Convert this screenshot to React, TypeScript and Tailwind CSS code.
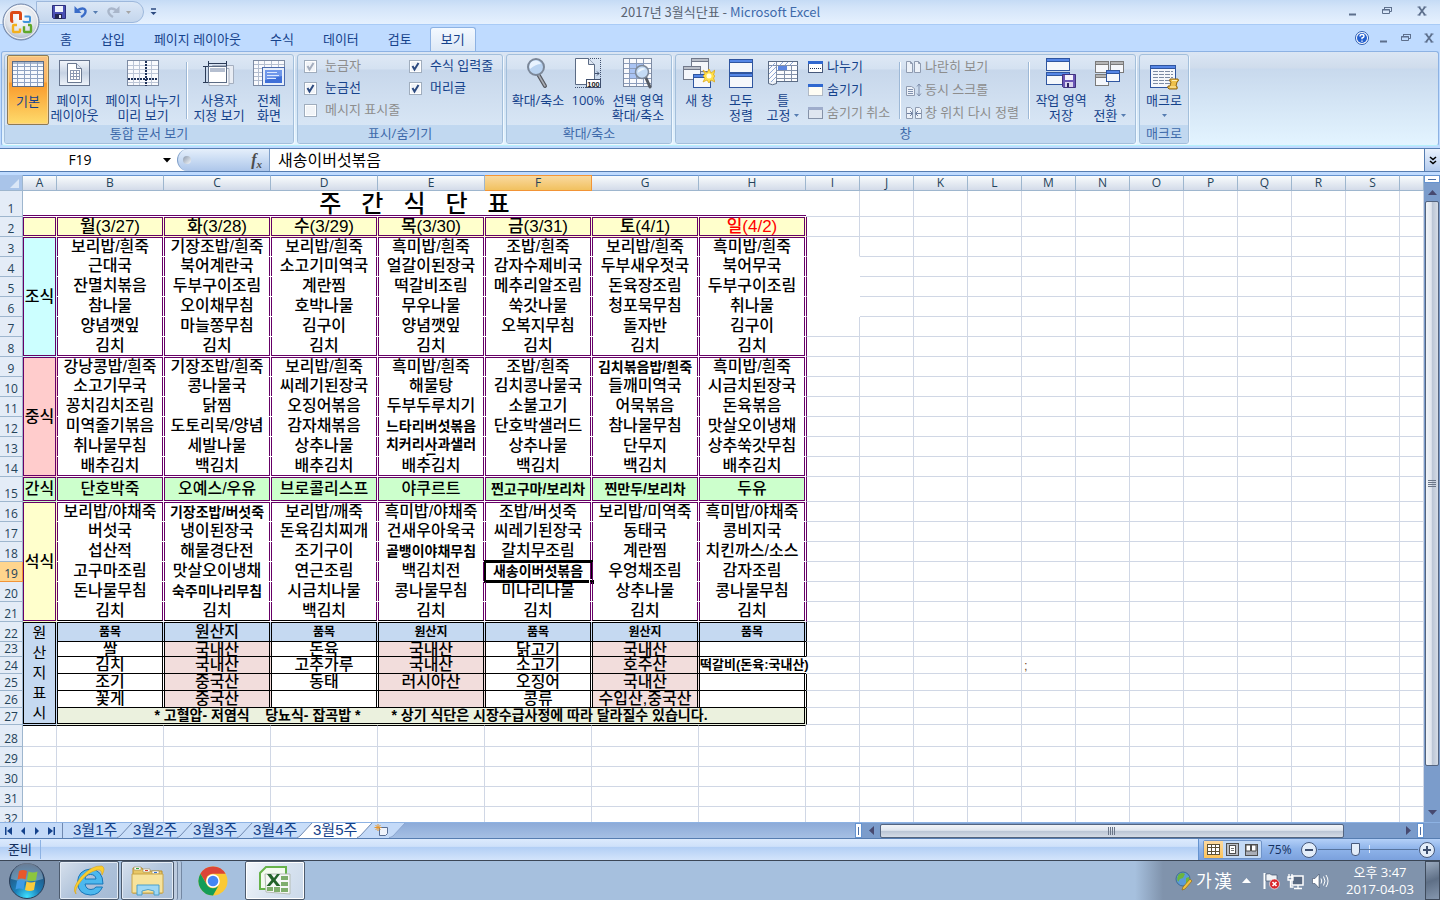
import React from 'react';

type IconProps = { className?: string };

/* ---------- ribbon icons ---------- */

const GridIcon = () => (
  <svg width="32" height="32" viewBox="0 0 32 32" shapeRendering="crispEdges">
    <rect x="0.5" y="2.5" width="31" height="25" fill="#f7f9fd" stroke="#5b6b84" />
    <path d="M1 3.500h30M1 4.500h30" stroke="#a9b8d0" />
    <path d="M1 7.500h30M1 11.500h30M1 15.500h30M1 19.500h30M1 23.500h30M5.500 3v24M12.500 3v24M18.500 3v24M25.500 3v24" stroke="#8fa2c2" />
  </svg>
);

const PageLayoutIcon = () => (
  <svg width="32" height="32" viewBox="0 0 32 32">
    <defs>
      <linearGradient id="pl" x1="0" y1="0" x2="0" y2="1">
        <stop offset="0" stopColor="#f4f7fc" />
        <stop offset=".5" stopColor="#c6d2e3" />
        <stop offset="1" stopColor="#eef3fa" />
      </linearGradient>
    </defs>
    <rect x="0.500" y="2.500" width="30" height="25" fill="url(#pl)" stroke="#67758e" />
    <path d="M8.500 5.500h9l5 5v14h-14z" fill="#fff" stroke="#6a7890" />
    <path d="M17.500 5.500v5h5" fill="#dfe6f1" stroke="#6a7890" />
    <path d="M11 12.500h10M11 15.500h10M11 18.500h10M11 21.500h10M11.500 12v10M14.500 12v10M17.500 12v10M20.500 12v10" stroke="#8b99b2" shapeRendering="crispEdges" />
  </svg>
);

const PageBreakIcon = () => (
  <svg width="32" height="32" viewBox="0 0 32 32" shapeRendering="crispEdges">
    <rect x="0.500" y="2.500" width="31" height="25" fill="#f9fafd" stroke="#7d8ba3" />
    <path d="M1 7.500h30M1 11.500h30M1 15.500h30M1 24.500h30M6.500 3v24M12.500 3v24M24.500 3v24" stroke="#bcc5d6" />
    <path d="M19 3v25M1 21h30" stroke="#1f3158" strokeWidth="2" strokeDasharray="2 1" />
  </svg>
);

const CustomViewIcon = () => (
  <svg width="32" height="32" viewBox="0 0 32 32">
    <path d="M9.500 7.500h21v18h-21z" fill="#e9edf4" stroke="#a5afbf" />
    <path d="M6 10.500h20v17H6z" fill="#f5f7fb" stroke="#a5afbf" />
    <rect x="5.500" y="8.500" width="18" height="16" fill="#fff" stroke="#5b6b84" />
    <rect x="7" y="10" width="15" height="4" fill="#b5bfd0" />
    <path d="M5 5.500h19M5.500 3v5M23.500 3v5M2.500 8v17M0 8.500h5M0 24.500h5" stroke="#2b3b57" shapeRendering="crispEdges" />
  </svg>
);

const FullScreenIcon = () => (
  <svg width="32" height="32" viewBox="0 0 32 32">
    <rect x="0.500" y="2.500" width="31" height="25" fill="#f9fafd" stroke="#7d8ba3" />
    <path d="M1 6.500h30M1 10.500h30M1 14.500h30M1 18.500h30M1 22.500h30M5.500 3v24M11.500 3v24M18.500 3v24M25.500 3v24" stroke="#b3bdcf" shapeRendering="crispEdges" />
    <rect x="9.500" y="9.500" width="22" height="18" fill="#e6eefb" stroke="#4c6cae" />
    <rect x="12" y="12" width="17" height="13" fill="#3f6fd8" />
    <path d="M12 12h17v6l-17 4z" fill="#6f97ea" />
    <path d="M14 14.500h10M14 17.500h12M14 20.500h9" stroke="#dce8ff" />
  </svg>
);

const MagnifierIcon = () => (
  <svg width="32" height="32" viewBox="0 0 32 32">
    <path d="M16 16l7 12" stroke="#55585f" strokeWidth="4" strokeLinecap="round" />
    <path d="M16 16l7 12" stroke="#a9adb5" strokeWidth="1.500" strokeLinecap="round" />
    <circle cx="14" cy="9" r="8" fill="#b9d3f1" stroke="#7b8798" strokeWidth="2" />
    <path d="M8 11a6 6 0 0 1 11-5q-5 0-11 5z" fill="#e8f3ff" />
  </svg>
);

const Page100Icon = () => (
  <svg width="32" height="32" viewBox="0 0 32 32">
    <path d="M18 0.500h10.500V30M3 29.500h12" fill="none" stroke="#3f4f6d" strokeDasharray="1 1" />
    <path d="M3.500 0.500h13l6 6v20h-19z" fill="#fff" stroke="#5b6b84" />
    <path d="M16.500 0.500v6h6" fill="#dde5f1" stroke="#5b6b84" />
    <path d="M23 15.500h4M25 13.500l2 2-2 2" fill="none" stroke="#3f4f6d" />
    <rect x="14.500" y="21.500" width="14" height="8" fill="#fff" stroke="#3f4f6d" />
    <text x="21.500" y="28.500" textAnchor="middle" fontSize="7.500" fontWeight="700" fontFamily="Liberation Sans, sans-serif" fill="#222">100</text>
  </svg>
);

const ZoomSelectionIcon = () => (
  <svg width="32" height="32" viewBox="0 0 32 32">
    <rect x="1.500" y="0.500" width="28" height="28" fill="#f9fafd" stroke="#7d8ba3" />
    <rect x="8" y="6" width="14" height="14" fill="#a9c3f3" />
    <path d="M2 5.500h27M2 10.500h27M2 15.500h27M2 20.500h27M2 25.500h27M7.500 1v27M14.500 1v27M21.500 1v27" stroke="#8b9cbb" shapeRendering="crispEdges" />
    <path d="M24 20l4 9" stroke="#555a63" strokeWidth="3" strokeLinecap="round" />
    <circle cx="20" cy="14" r="6.500" fill="#c4dbf5" stroke="#7b8798" strokeWidth="1.500" />
    <path d="M15.500 15a5 5 0 0 1 8-4q-4 1-8 4z" fill="#edf6ff" />
  </svg>
);

const Win = ({ x, y, w, h, c, s }: { x: number; y: number; w: number; h: number; c: string; s: string }) => (
  <g>
    <rect x={x + 0.5} y={y + 0.5} width={w} height={h} fill="#f5f7fb" stroke={s} />
    <rect x={x + 0.5} y={y + 0.5} width={w} height="3" fill={c} stroke={s} />
  </g>
);

const NewWindowIcon = () => (
  <svg width="32" height="32" viewBox="0 0 32 32">
    <Win x={8} y={0} w={17} h={13} c="#b9bec8" s="#70788a" />
    <Win x={0} y={8} w={17} h={13} c="#b9bec8" s="#70788a" />
    <Win x={10} y={16} w={17} h={13} c="#5586e6" s="#2f559f" />
    <path d="M20 12l4 3 2-4 2 4 4-3-1.500 5 1.500 1-1.500 2 1.500 4-4-2-2 3-2-3-4 2 2-4-2-2 2-2z" fill="#ffe14a" stroke="#e0a91a" strokeWidth=".8" />
    <circle cx="26" cy="18" r="2.500" fill="#fffce0" />
  </svg>
);

const ArrangeIcon = () => (
  <svg width="32" height="32" viewBox="0 0 32 32">
    <Win x={4} y={1} w={23} h={13} c="#5586e6" s="#2f559f" />
    <Win x={4} y={15} w={23} h={14} c="#5586e6" s="#2f559f" />
  </svg>
);

const FreezeIcon = () => (
  <svg width="32" height="32" viewBox="0 0 32 32">
    <rect x="1.500" y="3.500" width="29" height="20" fill="#fbfcfe" stroke="#5b6b84" />
    <path d="M1.500 7.500h29M10 12.500h20M10 16.500h20M10 20.500h20M9.500 4v22M17.500 8v15M24.500 8v15" stroke="#8391aa" shapeRendering="crispEdges" />
    <rect x="11" y="8" width="9" height="4" fill="#5c86e0" />
    <path d="M1.500 23v2.500q4 2.500 8 0V23" fill="#eef2f8" stroke="#5b6b84" />
    <path d="M2 11l6-6M2 16l7-7M2 21l7-7M4 24l5-5M13 7l3-3M18 7l3-3M23 7l3-3" stroke="#8fa8d6" />
  </svg>
);

const SaveWorkspaceIcon = () => (
  <svg width="32" height="32" viewBox="0 0 32 32">
    <Win x={1} y={0} w={23} h={12} c="#5586e6" s="#2f559f" />
    <Win x={1} y={14} w={23} h={12} c="#5586e6" s="#2f559f" />
    <path d="M17.500 16.500h13v13h-12l-1-1z" fill="#6b57b5" stroke="#41327f" />
    <rect x="20" y="17" width="8" height="5" fill="#f3f1fb" />
    <rect x="20" y="24" width="8" height="5" fill="#d9d4ee" />
    <rect x="22" y="25" width="2" height="4" fill="#2f2564" />
  </svg>
);

const SwitchWindowIcon = () => (
  <svg width="32" height="32" viewBox="0 0 32 32">
    <Win x={1} y={3} w={13} h={11} c="#b5b5b5" s="#7a7a7a" />
    <Win x={16} y={3} w={13} h={11} c="#b5b5b5" s="#7a7a7a" />
    <Win x={1} y={16} w={13} h={11} c="#b5b5b5" s="#7a7a7a" />
    <Win x={12} y={12} w={13} h={11} c="#5586e6" s="#2f559f" />
  </svg>
);

const MacroIcon = () => (
  <svg width="32" height="32" viewBox="0 0 32 32">
    <Win x={2} y={7} w={25} h={22} c="#5586e6" s="#2f559f" />
    <path d="M5 13.500h20M5 16.500h20M5 19.500h20M5 22.500h20M5 25.500h20" stroke="#7d8ba3" strokeDasharray="5 1" />
    <path d="M22 21h8q1.500 2-1 3l-1 4q2 0 1 3h-8q-2-1-1-3h2l1-4q-2 0-1-3z" fill="#eec04a" stroke="#8e6412" />
    <path d="M24 22.500h5M22 29h6" stroke="#fff0b5" />
  </svg>
);

const SmallSplit = () => (
  <svg width="16" height="14" viewBox="0 0 16 14">
    <rect x="0.500" y="1.500" width="14" height="11" fill="#fff" stroke="#46587a" />
    <rect x="0" y="1" width="15" height="3" fill="#2f67cf" />
    <path d="M2 8.500h12" stroke="#1f3158" strokeDasharray="1 1" />
  </svg>
);
const SmallHide = () => (
  <svg width="16" height="14" viewBox="0 0 16 14">
    <rect x="0.500" y="1.500" width="14" height="11" fill="#fffdf4" stroke="#7c8699" strokeDasharray="1 1" />
    <rect x="0" y="1" width="15" height="3" fill="#2f67cf" />
  </svg>
);
const SmallUnhide = () => (
  <svg width="16" height="14" viewBox="0 0 16 14">
    <rect x="0.500" y="1.500" width="14" height="11" fill="#dfe6f0" stroke="#8592a8" />
    <rect x="0" y="1" width="15" height="3" fill="#9eaccb" />
  </svg>
);
const SmallSide = () => (
  <svg width="16" height="14" viewBox="0 0 16 14">
    <path d="M0.500 1.500h4l2 2v9h-6zM8.500 1.500h4l2 2v9h-6z" fill="#edf2f9" stroke="#8f9bb0" />
    <path d="M4.500 1.500v2h2M12.500 1.500v2h2" fill="none" stroke="#8f9bb0" />
  </svg>
);
const SmallSync = () => (
  <svg width="16" height="14" viewBox="0 0 16 14">
    <path d="M0.500 3.500h5l3 2v7h-8z" fill="#edf2f9" stroke="#8f9bb0" />
    <path d="M2 6.500h5M2 8.500h5M2 10.500h5M13 1v12M11 3.500l2-2.500 2 2.500M11 10.500l2 2.500 2-2.500" fill="none" stroke="#8090ad" />
  </svg>
);
const SmallReset = () => (
  <svg width="16" height="14" viewBox="0 0 16 14">
    <path d="M0.500 1.500h4l2 2v9h-6zM9.500 1.500h4l2 2v9h-6z" fill="#edf2f9" stroke="#8f9bb0" />
    <path d="M1 7.500h5M4 5l2.500 2.500L4 10M15 7.500h-5M12 5L9.500 7.500 12 10" fill="none" stroke="#7081a2" />
  </svg>
);

/* ---------- window chrome icons ---------- */

const OfficeOrb = () => (
  <svg width="38" height="38" viewBox="0 0 38 38">
    <defs>
      <radialGradient id="orb" cx=".5" cy=".35" r=".7">
        <stop offset="0" stopColor="#ffffff" />
        <stop offset=".6" stopColor="#dfe3ea" />
        <stop offset="1" stopColor="#9aa7bb" />
      </radialGradient>
    </defs>
    <circle cx="19" cy="19" r="18" fill="url(#orb)" stroke="#6f84a8" />
    <circle cx="19" cy="19" r="16.500" fill="none" stroke="#fff" strokeOpacity=".8" />
    <rect x="9.500" y="9.500" width="9" height="9" rx="1.500" fill="none" stroke="#dc4a16" strokeWidth="3" strokeDasharray="28 8" strokeDashoffset="-22" />
    <rect x="21.500" y="13.500" width="6.500" height="5.500" rx="1" fill="none" stroke="#3f93dc" strokeWidth="2" strokeDasharray="18 5" strokeDashoffset="1" />
    <rect x="11" y="22" width="7" height="7" rx="1" fill="none" stroke="#f3b01c" strokeWidth="2.400" strokeDasharray="21 6" strokeDashoffset="-9" />
    <rect x="22" y="22" width="7" height="7" rx="1" fill="none" stroke="#5fa829" strokeWidth="2.400" strokeDasharray="21 6" strokeDashoffset="-3" />
  </svg>
);

const DiskIcon = () => (
  <svg width="14" height="14" viewBox="0 0 14 14">
    <path d="M0.500 0.500h13v13h-12l-1-1z" fill="#4a4fb4" stroke="#2d2f7c" />
    <rect x="3" y="1" width="8" height="6" fill="#eef2fb" />
    <rect x="3" y="9" width="7" height="5" fill="#23264f" />
    <rect x="7" y="10" width="2" height="3" fill="#e9ecf7" />
  </svg>
);

const UndoIcon = ({ className = '' }: IconProps) => (
  <svg width="14" height="14" viewBox="0 0 14 14" className={className}>
    <path d="M3 5.500q7-4 8.500 0 .8 3.500-4.500 6.500" fill="none" stroke="currentColor" strokeWidth="2.400" />
    <path d="M0.500 1v7h7z" fill="currentColor" />
  </svg>
);

const Caret = ({ className = '' }: IconProps) => (
  <svg width="5" height="3" viewBox="0 0 5 3" className={className}>
    <path d="M0 0h5L2.500 3z" fill="currentColor" />
  </svg>
);

const MinIcon = () => (
  <svg width="9" height="10" viewBox="0 0 9 10"><path d="M1 8.500h7" stroke="#5d6f8c" strokeWidth="2" /></svg>
);
const RestoreIcon = () => (
  <svg width="10" height="10" viewBox="0 0 10 10">
    <path d="M2.500 3V1.500h7v4H8" fill="none" stroke="#5d6f8c" />
    <path d="M0.500 3.500h7v4h-7z" fill="none" stroke="#5d6f8c" />
    <path d="M2 1.500h8M0 4h8" stroke="#5d6f8c" />
  </svg>
);
const CloseIcon = () => (
  <svg width="10" height="10" viewBox="0 0 10 10">
    <path d="M2 1l6 8M8 1L2 9" stroke="#5d6f8c" strokeWidth="1.800" />
    <path d="M0.500 1h3M6.500 1h3M0.500 9h3M6.500 9h3" stroke="#5d6f8c" />
  </svg>
);

/* ---------- ribbon parts ---------- */

const RibbonGroup = ({ label, className, children }: { label: string; className: string; children: React.ReactNode }) => (
  <section
    className={`flex shrink-0 flex-col rounded-[3px] border border-[#a3bfdb] bg-[linear-gradient(#dee8f5_0px,#d4e1f1_14px,#c7d7eb_15px,#d8e6f5_72px)] shadow-[1px_1px_0_#f0f8ff] ${className}`}
  >
    <div className="flex flex-1">{children}</div>
    <h2 className="h-[18px] rounded-b-[2px] bg-[#c1d8f0] text-center text-[13px] leading-[17px] font-normal text-[#3e6aaa]">{label}</h2>
  </section>
);

const BigButton = ({
  icon,
  lines,
  className,
  caret = false,
}: {
  icon: React.ReactNode;
  lines: string[];
  className: string;
  caret?: boolean;
}) => (
  <button type="button" className={`flex h-[70px] shrink-0 flex-col items-center pt-[3px] leading-[15px] whitespace-nowrap text-[#15428b] ${className}`}>
    {icon}
    <span className="mt-[3px]">{lines[0]}</span>
    <span className="flex h-[15px] items-center gap-1">
      {lines[1]}
      {caret && <Caret className="text-[#567db1]" />}
    </span>
  </button>
);

const Separator = () => <div className="mt-[7px] h-[57px] w-[2px] shrink-0 border-l border-[#9db8d6] bg-white" />;

const Check = ({ label, checked = false, disabled = false }: { label: string; checked?: boolean; disabled?: boolean }) => (
  <label className={`flex h-[22px] items-center gap-2 whitespace-nowrap ${disabled ? 'text-[#8d8d8d]' : 'text-[#15428b]'}`}>
    <span className="relative flex">
      <input
        type="checkbox"
        defaultChecked={checked}
        disabled={disabled}
        className="peer h-[13px] w-[13px] appearance-none border border-[#a0adbd] bg-[#f1f4f8] shadow-[inset_0_0_0_1px_#fff]"
      />
      <svg viewBox="0 0 13 13" className="pointer-events-none absolute inset-0 hidden peer-checked:block" fill="none">
        <path d="M3.500 6l2 3.500L9.500 3" stroke={disabled ? '#a4adbd' : '#2c4a80'} strokeWidth="2" />
      </svg>
    </span>
    {label}
  </label>
);

const SmallButton = ({ icon, label, disabled = false }: { icon: React.ReactNode; label: string; disabled?: boolean }) => (
  <button
    type="button"
    disabled={disabled}
    className={`flex h-[23px] items-center gap-[3px] whitespace-nowrap ${disabled ? 'text-[#8d8d8d]' : 'text-[#15428b]'}`}
  >
    {icon}
    {label}
  </button>
);

/* ---------- sheet data ---------- */

type Row = string[];
const sm = '~'; // prefix of entries set in the smaller size

const breakfast: Row[] = [
  ['보리밥/흰죽', '기장조밥/흰죽', '보리밥/흰죽', '흑미밥/흰죽', '조밥/흰죽', '보리밥/흰죽', '흑미밥/흰죽'],
  ['근대국', '북어계란국', '소고기미역국', '얼갈이된장국', '감자수제비국', '두부새우젓국', '북어무국'],
  ['잔멸치볶음', '두부구이조림', '계란찜', '떡갈비조림', '메추리알조림', '돈육장조림', '두부구이조림'],
  ['참나물', '오이채무침', '호박나물', '무우나물', '쑥갓나물', '청포묵무침', '취나물'],
  ['양념깻잎', '마늘쫑무침', '김구이', '양념깻잎', '오복지무침', '돌자반', '김구이'],
  ['김치', '김치', '김치', '김치', '김치', '김치', '김치'],
];
const lunch: Row[] = [
  ['강낭콩밥/흰죽', '기장조밥/흰죽', '보리밥/흰죽', '흑미밥/흰죽', '조밥/흰죽', '~김치볶음밥/흰죽', '흑미밥/흰죽'],
  ['소고기무국', '콩나물국', '씨레기된장국', '해물탕', '김치콩나물국', '들깨미역국', '시금치된장국'],
  ['꽁치김치조림', '닭찜', '오징어볶음', '두부두루치기', '소불고기', '어묵볶음', '돈육볶음'],
  ['미역줄기볶음', '도토리묵/양념', '감자채볶음', '~느타리버섯볶음', '단호박샐러드', '참나물무침', '맛살오이냉채'],
  ['취나물무침', '세발나물', '상추나물', '~치커리사과샐러드', '상추나물', '단무지', '상추쑥갓무침'],
  ['배추김치', '백김치', '배추김치', '배추김치', '백김치', '백김치', '배추김치'],
];
const snack: Row = ['단호박죽', '오예스/우유', '브로콜리스프', '야쿠르트', '~찐고구마/보리차', '~찐만두/보리차', '두유'];
const dinner: Row[] = [
  ['보리밥/야채죽', '~기장조밥/버섯죽', '보리밥/깨죽', '흑미밥/야채죽', '조밥/버섯죽', '보리밥/미역죽', '흑미밥/야채죽'],
  ['버섯국', '냉이된장국', '돈육김치찌개', '건새우아욱국', '씨레기된장국', '동태국', '콩비지국'],
  ['섭산적', '해물경단전', '조기구이', '~골뱅이야채무침', '갈치무조림', '계란찜', '치킨까스/소스'],
  ['고구마조림', '맛살오이냉채', '연근조림', '백김치전', '~새송이버섯볶음', '우엉채조림', '감자조림'],
  ['돈나물무침', '~숙주미나리무침', '시금치나물', '콩나물무침', '미나리나물', '상추나물', '콩나물무침'],
  ['김치', '김치', '백김치', '김치', '김치', '김치', '김치'],
];
const origin: Row[] = [
  ['쌀', '국내산', '돈육', '국내산', '닭고기', '국내산', ''],
  ['김치', '국내산', '고추가루', '국내산', '소고기', '호주산', '떡갈비(돈육:국내산)'],
  ['조기', '중국산', '동태', '러시아산', '오징어', '국내산', ''],
  ['꽃게', '중국산', '', '', '콩류', '수입산,중국산', ''],
];
const columns = ['A', 'B', 'C', 'D', 'E', 'F', 'G', 'H', 'I', 'J', 'K', 'L', 'M', 'N', 'O', 'P', 'Q', 'R', 'S', ''];

const rowHeight = (n: number) => {
  if (n === 1) return 'h-[26px]';
  if (n === 15) return 'h-[25px]';
  if (n === 23) return 'h-[15px]';
  if (n >= 24 && n <= 27) return 'h-[17px]';
  if (n === 28) return 'h-[22px]';
  return 'h-[20px]';
};

const RowHead = ({ n }: { n: number }) => (
  <th
    scope="row"
    className={`border-r border-b p-0 text-center align-bottom font-['Open_Sans',sans-serif] text-[12px] leading-[14px] font-normal ${
      n === 19 ? 'border-[#f29436] bg-[#ffd58d] text-[#24435a]' : 'border-[#9eb6ce] bg-[#e4ecf7] text-[#24435a]'
    }`}
  >
    {n}
  </th>
);

/* Empty cells to the right of the menu (columns I onwards). */
const Blank = ({ n, from }: { n: number; from: number }) => (
  <>
    {columns.slice(from).map((c, i) => {
      const col = from + i;
      const isI = col === 8;
      const noBottom = isI && n >= 3 && n <= 6;
      const noRight = isI && n >= 4 && n <= 6;
      let edge = '';
      if (isI && n >= 2 && n <= 21) edge = 'border-l border-l-[#660066]';
      if (isI && n >= 22 && n <= 27 && n !== 24) edge = 'border-l border-l-black';
      if (n === 28 && col <= 7) edge = 'border-t border-t-black';
      return (
        <td
          key={col}
          className={`border-r border-b p-0 pl-[2px] text-left text-[13px] leading-[15px] text-[#7a4a2a] ${noBottom ? 'border-b-white' : 'border-b-[#d0d7e5]'} ${noRight ? 'border-r-white' : 'border-r-[#d0d7e5]'} ${edge}`}
        >
          {n === 24 && c === 'M' ? ';' : null}
        </td>
      );
    })}
  </>
);

const MenuCell = ({ text, n, first, last, selected }: { text: string; n: number; first: boolean; last: boolean; selected: boolean }) => {
  const small = text.startsWith(sm);
  const label = small ? text.slice(1) : text;
  const wraps = label.length === 8 && small && !label.includes('/');
  return (
    <td className="relative p-0 pr-px pb-px">
      <div
        className={`border-x border-[#660066] text-center ${n === 15 ? 'h-[24px] bg-[#ccffcc] leading-[22px]' : 'h-[19px]'} ${
          wraps ? 'overflow-hidden px-1 leading-[15px] whitespace-normal' : n === 15 ? 'whitespace-nowrap' : 'leading-[18px] whitespace-nowrap'
        } ${small ? 'text-[14px] font-bold' : 'text-[16px] font-medium'} ${first ? 'border-t' : ''} ${last ? 'border-b' : ''} ${
          n === 21 ? 'border-b-black' : ''
        }`}
      >
        {label}
      </div>
      {selected && (
        <>
          <div className="absolute -top-[2px] -right-px -bottom-px -left-px border-x-2 border-y-3 border-black" />
          <div className="absolute -right-[2px] -bottom-[2px] h-[5px] w-[5px] border-t border-l border-white bg-black" />
        </>
      )}
    </td>
  );
};

const SideCell = ({ text, span, fill, inner }: { text: string; span: number; fill: string; inner: string }) => (
  <th scope="rowgroup" rowSpan={span} className={`p-0 pr-px pb-px ${fill}`}>
    <div className={`flex items-center justify-center border border-[#660066] text-[16px] leading-5 font-medium whitespace-nowrap ${inner}`}>{text}</div>
  </th>
);

const meal = (rows: Row[], start: number, side: React.ReactNode) =>
  rows.map((r, i) => {
    const n = start + i;
    return (
      <tr key={n} className={rowHeight(n)}>
        <RowHead n={n} />
        {i === 0 && side}
        {r.map((t, j) => (
          <MenuCell key={j} text={t} n={n} first={i === 0} last={i === rows.length - 1} selected={n === 19 && j === 4} />
        ))}
        <Blank n={n} from={8} />
      </tr>
    );
  });

const Sheet = () => (
  <table className="w-full table-fixed border-separate border-spacing-0 font-['Liberation_Sans','Noto_Sans_CJK_KR',sans-serif] text-black">
    <colgroup>
      <col className="w-[23px]" />
      <col className="w-[34px]" />
      {columns.slice(1, 8).map((c) => (
        <col key={c} className="w-[107px]" />
      ))}
      {columns.slice(8, 19).map((c) => (
        <col key={c} className="w-[54px]" />
      ))}
      <col />
    </colgroup>
    <thead>
      <tr className="h-[16px] font-['Open_Sans',sans-serif] text-[12px] leading-[14px] text-[#24435a]">
        <td className="border-r border-b border-[#9eb6ce] bg-[#a9c4e9] p-0">
          <svg width="22" height="14" viewBox="0 0 22 14" className="block">
            <path d="M19 3v9H10z" fill="#dbe7f7" />
          </svg>
        </td>
        {columns.map((c, i) => (
          <th
            key={i}
            scope="col"
            className={`border-t border-r border-b p-0 font-normal ${
              c === 'F'
                ? 'border-[#f29436] bg-[linear-gradient(#f9d99f,#f1c15f)]'
                : 'border-[#9eb6ce] border-t-[#6593cf] bg-[linear-gradient(#f9fcfd,#d3dbe9)]'
            }`}
          >
            {c}
          </th>
        ))}
      </tr>
    </thead>
    <tbody>
      <tr className="h-[26px]">
        <RowHead n={1} />
        <td colSpan={8} className="p-0 pb-px">
          <div className="h-[25px] border-b border-[#660066] text-center text-[24px] leading-[25px] font-medium whitespace-pre">
            {'주   간   식   단   표'}
          </div>
        </td>
        <Blank n={1} from={8} />
      </tr>
      <tr className="h-[20px]">
        <RowHead n={2} />
        {['', '월(3/27)', '화(3/28)', '수(3/29)', '목(3/30)', '금(3/31)', '토(4/1)', '일(4/2)'].map((d, i) => (
          <td key={i} className="bg-[#ffffcc] p-0 pr-px pb-px">
            <div
              className={`h-[19px] border border-[#660066] text-center text-[17px] leading-[17px] font-medium ${i === 7 ? 'text-[#ff0000]' : ''}`}
            >
              {d}
            </div>
          </td>
        ))}
        <Blank n={2} from={8} />
      </tr>
      {meal(breakfast, 3, <SideCell text="조식" span={6} fill="bg-[#ccffff]" inner="h-[119px]" />)}
      {meal(lunch, 9, <SideCell text="중식" span={6} fill="bg-[#ffcccc]" inner="h-[119px]" />)}
      {meal([snack], 15, <SideCell text="간식" span={1} fill="bg-[#ccffcc]" inner="h-[24px]" />)}
      {meal(dinner, 16, <SideCell text="석식" span={6} fill="bg-[#ffffcc]" inner="h-[119px]" />)}
      <tr className="h-[20px]">
        <RowHead n={22} />
        <th scope="rowgroup" rowSpan={6} className="bg-[#c5d9f1] p-0 pr-px pb-px">
          <div className="flex h-[102px] items-center justify-center border border-black text-[15px] leading-[20px] font-normal">
            <span className="w-4">원산지표시</span>
          </div>
        </th>
        {['품목', '원산지', '품목', '원산지', '품목', '원산지', '품목'].map((t, j) => (
          <th key={j} className="border-b border-black bg-[#c5d9f1] p-0 pr-px">
            <div
              className={`h-[19px] border-x border-t border-black text-center leading-[18px] ${
                j === 1 ? 'text-[16px] font-medium' : 'text-[12px] font-bold'
              }`}
            >
              {t}
            </div>
          </th>
        ))}
        <Blank n={22} from={8} />
      </tr>
      {origin.map((r, i) => {
        const n = 23 + i;
        return (
          <tr key={n} className={rowHeight(n)}>
            <RowHead n={n} />
            {r.map((t, j) => {
              const long = n === 24 && j === 6;
              const pink = j === 1 || j === 3 || j === 5;
              return (
                <td key={j} className={`border-b border-black p-0 pr-px ${pink ? 'bg-[#f2dddc]' : ''}`}>
                  <div
                    className={`border-black text-center whitespace-nowrap ${n === 23 ? 'h-[14px] leading-[15px]' : 'h-[16px] leading-[16px]'} ${
                      long ? 'border-l text-left text-[13px] font-bold' : 'border-x text-[16px] font-medium'
                    }`}
                  >
                    {t}
                  </div>
                </td>
              );
            })}
            <Blank n={n} from={8} />
          </tr>
        );
      })}
      <tr className="h-[17px]">
        <RowHead n={27} />
        <td colSpan={7} className="bg-[#ebf1de] p-0 pr-px pb-px">
          <div className="h-[16px] border-x border-b border-black text-center text-[14px] leading-[15px] font-bold whitespace-pre">
            {'* 고혈압- 저염식    당뇨식- 잡곡밥 *        * 상기 식단은 시장수급사정에 따라 달라질수 있습니다.'}
          </div>
        </td>
        <Blank n={27} from={8} />
      </tr>
      {[28, 29, 30, 31, 32].map((n) => (
        <tr key={n} className={rowHeight(n)}>
          <RowHead n={n} />
          <Blank n={n} from={0} />
        </tr>
      ))}
    </tbody>
  </table>
);

/* ---------- scroll bars, sheet tabs ---------- */

const VerticalScroll = () => (
  <div className="flex w-4 shrink-0 flex-col items-center bg-[#7b9ccb]">
    <div className="flex h-2 w-full items-center justify-center border border-[#6593cf] bg-white">
      <div className="h-px w-2 bg-[#4a6ea5]" />
    </div>
    <button type="button" aria-label="위로" className="flex h-[18px] w-full items-center justify-center">
      <svg width="9" height="5" viewBox="0 0 9 5"><path d="M0 5h9L4.500 0z" fill="#47496f" /></svg>
    </button>
    <div className="flex w-[14px] flex-1 items-center justify-center rounded-[2px] border border-[#53647f] bg-[linear-gradient(90deg,#f1f4f8,#dfe5ee_45%,#b9c4d4_50%,#d5dce6)]">
      <div className="h-[8px] w-[8px] bg-[repeating-linear-gradient(#6b7688_0px,#6b7688_1px,transparent_1px,transparent_2px)]" />
    </div>
    <div className="h-[37px]" />
    <button type="button" aria-label="아래로" className="flex h-[19px] w-full items-center justify-center">
      <svg width="9" height="5" viewBox="0 0 9 5"><path d="M0 0h9L4.500 5z" fill="#47496f" /></svg>
    </button>
  </div>
);

const NavArrow = ({ d, label }: { d: string; label: string }) => (
  <button type="button" aria-label={label} className="flex w-[14px] justify-center">
    <svg width="8" height="8" viewBox="0 0 8 8"><path d={d} fill="#15428b" /></svg>
  </button>
);

const Slant = ({ left, right }: { left: string; right: string }) => (
  <svg width="16" height="15" viewBox="0 0 16 15" className="shrink-0">
    <rect width="16" height="15" fill={right} />
    <path d="M0 0h15L3 13q-2 2-3 2z" fill={left} />
    <path d="M15 0L3 13q-2 1.500-3 1.500" fill="none" stroke="#7089b0" />
  </svg>
);

const SheetTabs = () => (
  <div className="flex h-4 shrink-0 border-t border-[#8db2e3] bg-[linear-gradient(#8dabd8,#a5bfe4)]">
    <div className="flex items-center bg-[#c4daf8] pr-[4px] pl-[2px]">
      <NavArrow d="M0 0h1.500v8H0zM7 0v8L2 4z" label="처음" />
      <NavArrow d="M6 0v8L2 4z" label="이전" />
      <NavArrow d="M2 0v8l4-4z" label="다음" />
      <NavArrow d="M1 0v8l5-4zM6.500 0H8v8H6.500z" label="끝" />
    </div>
    <div className="flex font-['Liberation_Sans','Noto_Sans_CJK_KR',sans-serif] text-[15px] leading-[14px] text-[#15428b]">
      <div className="w-[11px] border-l border-[#7089b0] bg-[#c4daf8]" />
      {['3월1주', '3월2주', '3월3주', '3월4주', '3월5주'].map((t, i) => (
        <React.Fragment key={t}>
          <button
            type="button"
            className={`h-[15px] w-[44px] border-b whitespace-nowrap ${i === 4 ? 'border-white bg-white' : 'border-[#8db2e3] bg-[#c9def9]'}`}
          >
            {t}
          </button>
          {i < 3 && <Slant left="#c9def9" right="#c9def9" />}
          {i === 3 && <Slant left="#c9def9" right="#ffffff" />}
          {i === 4 && <Slant left="#ffffff" right="#c4daf8" />}
        </React.Fragment>
      ))}
      <button type="button" aria-label="새 시트" className="flex">
        <svg width="36" height="15" viewBox="0 0 36 15">
          <path d="M0 0h32L20 13q-2 2-4 2H0z" fill="#c4daf8" />
          <path d="M32 0L20 13q-2 1.500-4 1.500" fill="none" stroke="#8ba6cf" />
          <path d="M6.500 4.500h8v6l-2 2h-6z" fill="#eef3fb" stroke="#5a6f94" />
          <path d="M5 1v7M1.500 4.500h7M2.500 2l5 5M7.500 2l-5 5" stroke="#e8962a" />
        </svg>
      </button>
    </div>
    <div className="flex-1" />
    <div className="flex w-[585px] shrink-0 items-center bg-[#7b9ccb]">
      <div className="flex h-full w-[7px] items-center justify-center border border-[#6593cf] bg-white">
        <div className="h-2 w-px bg-[#4a6ea5]" />
      </div>
      <button type="button" aria-label="왼쪽으로" className="flex w-[18px] justify-center">
        <svg width="5" height="9" viewBox="0 0 5 9"><path d="M5 0v9L0 4.500z" fill="#47496f" /></svg>
      </button>
      <div className="flex h-[14px] w-[464px] items-center justify-center rounded-[2px] border border-[#53647f] bg-[linear-gradient(#f1f4f8,#dfe5ee_45%,#b9c4d4_50%,#d5dce6)]">
        <div className="h-[8px] w-[8px] bg-[repeating-linear-gradient(90deg,#6b7688_0px,#6b7688_1px,transparent_1px,transparent_2px)]" />
      </div>
      <div className="flex-1" />
      <button type="button" aria-label="오른쪽으로" className="flex w-[18px] justify-center">
        <svg width="5" height="9" viewBox="0 0 5 9"><path d="M0 0v9l5-4.500z" fill="#47496f" /></svg>
      </button>
      <div className="flex h-full w-[7px] items-center justify-center border border-[#6593cf] bg-white">
        <div className="h-2 w-px bg-[#4a6ea5]" />
      </div>
      <div className="w-4" />
    </div>
  </div>
);

/* ---------- status bar ---------- */

const RoundButton = ({ plus = false }: { plus?: boolean }) => (
  <button type="button" aria-label={plus ? '확대' : '축소'} className="shrink-0">
    <svg width="18" height="18" viewBox="0 0 18 18">
      <circle cx="9" cy="9" r="7.500" fill="#e3edf9" stroke="#46597c" />
      <path d={plus ? 'M5 9h8M9 5v8' : 'M5 9h8'} stroke="#3f506f" strokeWidth="2" />
    </svg>
  </button>
);

const StatusBar = () => (
  <div className="flex h-[22px] shrink-0 border-t border-[#567db1] bg-[linear-gradient(#dceafd,#cfe1fa_35%,#b3cff5_40%,#d3e4fb)] text-[13px] text-[#15305f]">
    <div className="my-px flex w-[41px] items-center border-r border-[#8db2e3] pl-2">준비</div>
    <div className="flex-1" />
    <div className="flex items-center border-l border-[#6593cf] bg-[linear-gradient(#b4d0f8,#8fb4ea_45%,#7ba1dd)] pl-1">
      <div className="flex h-[19px] items-center rounded-[2px] border border-[#6f93c8] bg-[#c4daf5]">
        <button type="button" aria-label="기본 보기" className="flex h-full w-[19px] items-center justify-center bg-[linear-gradient(#fbd9a0,#fdc358)]">
          <svg width="13" height="11" viewBox="0 0 13 11"><rect x=".5" y=".5" width="12" height="10" fill="#fff" stroke="#5c5137" /><path d="M0 3.500h13M0 7.500h13M4.500 0v11M8.500 0v11" stroke="#5c5137" /></svg>
        </button>
        <button type="button" aria-label="페이지 레이아웃" className="flex h-full w-[19px] items-center justify-center">
          <svg width="13" height="13" viewBox="0 0 13 13"><rect x=".5" y=".5" width="12" height="12" fill="#b8bcc4" stroke="#4f4f4f" /><rect x="3.500" y="2.500" width="6" height="8" fill="#fff" stroke="#4f4f4f" /><path d="M5 5.500h3M5 7.500h3" stroke="#777" /></svg>
        </button>
        <button type="button" aria-label="페이지 나누기" className="flex h-full w-[19px] items-center justify-center">
          <svg width="13" height="12" viewBox="0 0 13 12"><rect x=".5" y=".5" width="12" height="11" fill="#a9aeb8" stroke="#4f4f4f" /><path d="M1 1h4.500v6H1zM6.500 1H11v6H6.500z" fill="#fff" stroke="#4f4f4f" /></svg>
        </button>
      </div>
      <span className="ml-[6px] w-[32px] text-[12px]">75%</span>
      <RoundButton />
      <div className="relative flex h-full w-[100px] items-center">
        <div className="absolute top-[6px] left-[51px] h-2 w-px bg-[#dfeafb]" />
        <input
          type="range"
          aria-label="확대/축소 비율"
          min={10}
          max={190}
          defaultValue={75}
          className="relative h-[14px] w-full appearance-none bg-[linear-gradient(#56749f,#56749f)] bg-[length:100%_1px] bg-center bg-no-repeat [&::-webkit-slider-thumb]:h-[13px] [&::-webkit-slider-thumb]:w-[9px] [&::-webkit-slider-thumb]:appearance-none [&::-webkit-slider-thumb]:rounded-b-[4px] [&::-webkit-slider-thumb]:border [&::-webkit-slider-thumb]:border-[#46597c] [&::-webkit-slider-thumb]:bg-[#e3edf9]"
        />
      </div>
      <RoundButton plus />
      <div className="w-1" />
    </div>
  </div>
);

/* ---------- taskbar ---------- */

const Taskbar = () => (
  <div className="flex h-[40px] shrink-0 items-center border-t border-[#3b4656] bg-[#a6c0de]">
    <div className="flex h-full w-[59px] items-center bg-[#8093ac] pl-[8px]">
      <button type="button" aria-label="시작">
        <svg width="38" height="38" viewBox="0 0 38 38">
          <defs>
            <radialGradient id="start" cx=".5" cy=".95" r=".9">
              <stop offset="0" stopColor="#3fe0ff" />
              <stop offset=".4" stopColor="#1b7fb8" />
              <stop offset="1" stopColor="#27486f" />
            </radialGradient>
          </defs>
          <circle cx="19" cy="19" r="17.500" fill="url(#start)" stroke="#2b3d57" />
          <path d="M3 17a16 16 0 0 1 32 0q-16 5-32 0z" fill="#fff" fillOpacity=".3" />
          <path d="M11 9q4-2 8 0l-1.500 8.500q-4-2-8 0z" fill="#e8582a" />
          <path d="M20.500 9.500q4.500 2 9 0L28 18q-4.500 2-9 0z" fill="#8cc63e" />
          <path d="M9 19q4-2 8 0l-1.500 8.500q-4-2-8 0z" fill="#3f9be6" />
          <path d="M18.500 19.500q4.500 2 9 0L26 28q-4.500 2-9 0z" fill="#fbcb3c" />
        </svg>
      </button>
    </div>
    <button type="button" aria-label="Internet Explorer" className="flex h-full w-[60px] items-center justify-center rounded-[2px] border border-[#4d5b6e] bg-[linear-gradient(135deg,#d6e0ec,#afc2da_50%,#a4bad5)] shadow-[inset_0_0_0_1px_#e3ebf5]">
      <svg width="34" height="34" viewBox="0 0 34 34">
        <path d="M31 20H13q1 5.500 6 5.500 3 0 5-2.500h6.500Q27 31 18.500 31 6 30.500 5.500 18.500 6 6 18.500 5 31 6 31 20zM13 15h11q-.5-4.500-5.500-4.500T13 15z" fill="#4cb8ee" stroke="#1976b8" />
        <path d="M4 30Q-1 25 9 13 20 1 30 2q4 2 0 9 0-6-5-5Q16 8 9 17T4 30z" fill="#fbce2f" stroke="#dba514" strokeWidth=".6" />
      </svg>
    </button>
    <button type="button" aria-label="탐색기" className="ml-[2px] flex h-full w-[53px] items-center justify-center rounded-[2px] border border-[#4d5b6e] bg-[linear-gradient(135deg,#d6e0ec,#b4c7de_50%,#a9bfd9)] shadow-[inset_0_0_0_1px_#e3ebf5]">
      <svg width="34" height="32" viewBox="0 0 34 32">
        <path d="M2 3h9l2 3h18v22H2z" fill="#e8c767" stroke="#b98f2c" />
        <path d="M3 2h7v3H3zM12 4h7v3h-7zM21 6h7v3h-7z" fill="#fff" stroke="#9c8a55" strokeWidth=".6" />
        <path d="M5 3h3v1H5z" fill="#2ca33a" /><path d="M14 5h3v1h-3z" fill="#d33b2a" /><path d="M23 7h3v1h-3z" fill="#2c6fd3" />
        <path d="M1 9h31v19H1z" fill="#f7e39c" stroke="#c9a548" />
        <path d="M6 30V20h22v10h-5v-4q-6-3-12 0v4z" fill="#9fd8f5" stroke="#4a9fcb" />
      </svg>
    </button>
    <div className="h-full w-[4px] rounded-r-[2px] border-r border-[#7488a3] bg-[#bccbdf]" />
    <div className="h-full w-[4px] rounded-r-[2px] border-r border-[#7488a3] bg-[#b2c5dc]" />
    <button type="button" aria-label="Chrome" className="ml-[1px] flex h-full w-[60px] items-center justify-center">
      <svg width="30" height="30" viewBox="0 0 30 30">
        <circle cx="15" cy="15" r="14.500" fill="#fbc934" />
        <path d="M2.440 7.750A14.500 14.500 0 0 1 27.560 7.750H15A7 7 0 0 0 9 18.500z" fill="#dc4437" />
        <path d="M2.440 7.750A14.500 14.500 0 0 0 15 29.500L21.200 18.500A7 7 0 0 1 8.800 18.500z" fill="#149d58" />
        <circle cx="15" cy="15" r="6.800" fill="#fff" />
        <circle cx="15" cy="15" r="5.300" fill="#4486f4" />
      </svg>
    </button>
    <button type="button" aria-label="Excel" className="ml-[2px] flex h-full w-[60px] items-center justify-center rounded-[2px] border border-[#4d5b6e] bg-[linear-gradient(120deg,#f2f6fb,#d9e4f0_50%,#cbd9ea)] shadow-[inset_0_0_0_1px_#ffffff]">
      <svg width="32" height="32" viewBox="0 0 32 32">
        <path d="M7 2h20v22H1V8z" fill="#f3faef" stroke="#67b34a" strokeWidth="2" />
        <path d="M6 9h25v20l-24-2z" fill="#f6f8f6" stroke="#b5bdb5" />
        <path d="M22 11h7v4h-7zM22 17h7v4h-7zM22 23h7v4h-7zM15 22h6v5h-6zM8 22h6v4H8z" fill="#7fae6c" />
        <path d="M8 9h4l3 4 3-4h3l-4.500 6 5 6h-4l-3-4-3.500 4H7.500l5-6z" fill="#24632a" />
      </svg>
    </button>
    <div className="flex-1" />
    <div className="flex h-full items-center bg-[linear-gradient(90deg,#a6c0de,#8093ac_28px)] pl-[40px] text-white">
      <svg width="18" height="20" viewBox="0 0 18 20">
        <circle cx="8" cy="8" r="7" fill="#5b9bd8" stroke="#3e6c94" />
        <path d="M4 3q4-2 6 0l-2 4-3 1-2 3Q1 7 4 3zM11 7l3-1q1 4-3 7z" fill="#6bb53e" />
        <path d="M15 8l2 2-7 8-3 1 1-3z" fill="#f0c23f" stroke="#8f6a1a" strokeWidth=".7" />
      </svg>
      <span className="ml-[3px] w-[18px] text-[17px] leading-5">가</span>
      <span className="text-[18px] leading-5">漢</span>
      <svg width="9" height="5" viewBox="0 0 9 5" className="ml-[10px]"><path d="M0 5h9L4.500 0z" fill="#fff" /></svg>
      <svg width="18" height="18" viewBox="0 0 18 18" className="ml-[12px]">
        <path d="M1.500 1v16" stroke="#fff" strokeWidth="2" />
        <path d="M3 2q4-1 6 1h5v7q-3 1-6-1H3z" fill="#eef1f5" stroke="#41506a" strokeWidth=".7" />
        <circle cx="11.500" cy="12" r="5" fill="#d8262c" stroke="#fff" strokeWidth=".6" />
        <path d="M9.500 10l4 4M13.500 10l-4 4" stroke="#fff" strokeWidth="1.600" />
      </svg>
      <svg width="18" height="18" viewBox="0 0 18 18" className="ml-[6px]">
        <rect x="5" y="4" width="11" height="9" fill="#5a6a82" stroke="#fff" strokeWidth="1.500" />
        <path d="M7 16.500h8M11 13v3M2 2v4M5 2v4M1 5h5v3H1zM3.500 8v7h3" fill="none" stroke="#fff" strokeWidth="1.300" />
      </svg>
      <svg width="18" height="18" viewBox="0 0 18 18" className="ml-[6px]">
        <path d="M1.500 6.500H4L8 2v14l-4-4.500H1.500z" fill="#fff" stroke="#41506a" strokeWidth=".6" />
        <path d="M10 6.500q1.500 2.500 0 5M12.500 4.500q3 4.500 0 9M15 3q4 6 0 12" fill="none" stroke="#fff" />
      </svg>
      <div className="ml-[6px] w-[90px] text-center text-[13px] leading-[17px]">
        <div>오후 3:47</div>
        <div>2017-04-03</div>
      </div>
      <button type="button" aria-label="바탕 화면 보기" className="h-full w-[15px] border border-[#3f4b5c] bg-[linear-gradient(160deg,#9aaabf,#5e6f86_50%,#8597af)]" />
    </div>
  </div>
);

/* ---------- page ---------- */

export default function App() {
  return (
    <div className="flex h-screen flex-col overflow-hidden bg-[#bfdbff] font-['Open_Sans','Noto_Sans_CJK_KR',sans-serif] text-[13px]">
      <header className="relative shrink-0">
        <div className="flex h-[25px] items-center border-b border-[#a9cbf6] bg-[linear-gradient(#c5dbf5,#d3e4f9_30%,#e6f1fe)]">
          <div className="ml-[36px] flex h-[22px] w-[108px] items-center rounded-r-[11px] border border-[#9db8dc] bg-[linear-gradient(#dbe7f6,#c4d6ed)] pl-[15px]">
            <button type="button" aria-label="저장"><DiskIcon /></button>
            <button type="button" aria-label="실행 취소" className="ml-[8px]"><UndoIcon className="text-[#3a6cc8]" /></button>
            <Caret className="ml-[5px] text-[#567db1]" />
            <button type="button" aria-label="다시 실행" className="ml-[8px]"><UndoIcon className="-scale-x-100 text-[#a9b6ca]" /></button>
            <Caret className="ml-[6px] text-[#a5a5a5]" />
          </div>
          <button type="button" aria-label="도구 모음 사용자 지정" className="ml-[6px]">
            <svg width="7" height="8" viewBox="0 0 7 8"><path d="M1 1h5" stroke="#2c4a80" strokeWidth="1.500" /><path d="M0.500 4h6l-3 3z" fill="#2c4a80" /></svg>
          </button>
          <h1 className="min-w-0 flex-1 pr-[64px] text-center font-['Noto_Sans_CJK_KR',sans-serif] font-normal text-[#5a6472]">
            2017년 3월식단표 - <span className="text-[#3e6aaa]">Microsoft Excel</span>
          </h1>
          <div className="flex gap-[25px] pr-[13px] pb-[3px]">
            <button type="button" aria-label="최소화"><MinIcon /></button>
            <button type="button" aria-label="이전 크기로"><RestoreIcon /></button>
            <button type="button" aria-label="닫기"><CloseIcon /></button>
          </div>
        </div>
        <nav className="flex h-[26px] items-end gap-[7px] pl-[49px] text-[#15428b]">
          {['홈', '삽입', '페이지 레이아웃', '수식', '데이터', '검토'].map((t) => (
            <button key={t} type="button" className="h-6 px-[11px] leading-6 whitespace-nowrap">{t}</button>
          ))}
          <button type="button" className="h-6 rounded-t-[3px] border border-b-0 border-[#8db2e3] bg-[linear-gradient(#f4f9ff,#dce8f6)] px-[10px] leading-[23px] whitespace-nowrap">
            보기
          </button>
          <div className="flex-1" />
          <div className="flex h-[26px] items-center gap-[13px] pr-[6px]">
            <button type="button" aria-label="도움말" className="-mr-[3px]">
              <svg width="14" height="14" viewBox="0 0 14 14">
                <circle cx="7" cy="7" r="6.500" fill="#fff" stroke="#2c5cb0" />
                <circle cx="7" cy="7" r="5" fill="#2460cf" />
                <path d="M5 5.500q0-2 2-2t2 1.700Q9 6.300 7 7v1.300M7 9.500v1.300" fill="none" stroke="#fff" strokeWidth="1.400" />
              </svg>
            </button>
            <button type="button" aria-label="창 최소화"><MinIcon /></button>
            <button type="button" aria-label="창 복원"><RestoreIcon /></button>
            <button type="button" aria-label="창 닫기"><CloseIcon /></button>
          </div>
        </nav>
        <button type="button" aria-label="Office 단추" className="absolute top-[3px] left-[2px]"><OfficeOrb /></button>

        <div className="mx-px flex h-[95px] gap-[3px] rounded-[3px] border border-[#8db2e3] border-b-[#b5f0fb] bg-[linear-gradient(#dbe6f4_0px,#cfdcec_16px,#c8d9ed_17px,#e3f4ff)] px-[2px] pt-[2px] pb-px text-[13px]">
          <RibbonGroup label="통합 문서 보기" className="w-[290px]">
            <div className="flex pl-[2px]">
              <BigButton icon={<GridIcon />} lines={['기본', '']} className="w-[42px] rounded-[2px] border border-[#8e7a55] bg-[linear-gradient(#f9c283,#fbb35f_38%,#f99a2c_40%,#fedb6c)] shadow-[inset_0_0_0_1px_#fcd48a]" />
              <BigButton icon={<PageLayoutIcon />} lines={['페이지', '레이아웃']} className="w-[51px]" />
              <BigButton icon={<PageBreakIcon />} lines={['페이지 나누기', '미리 보기']} className="w-[86px]" />
              <Separator />
              <BigButton icon={<CustomViewIcon />} lines={['사용자', '지정 보기']} className="w-[62px]" />
              <BigButton icon={<FullScreenIcon />} lines={['전체', '화면']} className="w-[38px]" />
            </div>
          </RibbonGroup>
          <RibbonGroup label="표시/숨기기" className="w-[206px]">
            <div className="flex pl-[6px]">
              <div className="w-[105px]">
                <Check label="눈금자" checked disabled />
                <Check label="눈금선" checked />
                <Check label="메시지 표시줄" disabled />
              </div>
              <div>
                <Check label="수식 입력줄" checked />
                <Check label="머리글" checked />
              </div>
            </div>
          </RibbonGroup>
          <RibbonGroup label="확대/축소" className="w-[166px]">
            <div className="flex pl-[3px]">
              <BigButton icon={<MagnifierIcon />} lines={['확대/축소', '']} className="w-[56px]" />
              <BigButton icon={<Page100Icon />} lines={['100%', '']} className="w-[44px]" />
              <BigButton icon={<ZoomSelectionIcon />} lines={['선택 영역', '확대/축소']} className="w-[56px]" />
            </div>
          </RibbonGroup>
          <RibbonGroup label="창" className="w-[461px]">
            <div className="flex pl-[2px]">
              <BigButton icon={<NewWindowIcon />} lines={['새 창', '']} className="w-[42px]" />
              <BigButton icon={<ArrangeIcon />} lines={['모두', '정렬']} className="w-[42px]" />
              <BigButton icon={<FreezeIcon />} lines={['틀', '고정']} caret className="w-[42px]" />
              <div className="ml-1 w-[91px]">
                <SmallButton icon={<SmallSplit />} label="나누기" />
                <SmallButton icon={<SmallHide />} label="숨기기" />
                <SmallButton icon={<SmallUnhide />} label="숨기기 취소" disabled />
              </div>
              <Separator />
              <div className="ml-[5px] w-[122px]">
                <SmallButton icon={<SmallSide />} label="나란히 보기" disabled />
                <SmallButton icon={<SmallSync />} label="동시 스크롤" disabled />
                <SmallButton icon={<SmallReset />} label="창 위치 다시 정렬" disabled />
              </div>
              <Separator />
              <BigButton icon={<SaveWorkspaceIcon />} lines={['작업 영역', '저장']} className="ml-[3px] w-[56px]" />
              <BigButton icon={<SwitchWindowIcon />} lines={['창', '전환']} caret className="w-[42px]" />
            </div>
          </RibbonGroup>
          <RibbonGroup label="매크로" className="w-[50px]">
            <BigButton icon={<MacroIcon />} lines={['매크로', '']} caret className="w-full" />
          </RibbonGroup>
        </div>
      </header>

      <div className="mt-[2px] flex h-6 shrink-0 border-y border-[#567db1] bg-white">
        <div className="flex w-[177px] shrink-0 items-center">
          <input aria-label="이름 상자" defaultValue="F19" className="w-[160px] bg-transparent text-center text-[14px] leading-5 outline-none" />
          <svg width="8" height="5" viewBox="0 0 8 5" className="ml-[3px]"><path d="M0 0h8L4 4.500z" fill="#000" /></svg>
        </div>
        <div className="flex w-[93px] shrink-0 items-center justify-between rounded-l-[11px] border-x border-[#7f9fc9] bg-[linear-gradient(#e5effb,#c9dbf3_50%,#adc6ea)] pr-[7px] pl-[5px]">
          <div className="h-2 w-2 rounded-full bg-[linear-gradient(135deg,#8d9aac,#f4f7fb)]" />
          <button type="button" className="font-['Liberation_Serif',serif] text-[16px] leading-5 font-bold text-[#4c4c4c] italic">
            f<sub className="text-[11px]">x</sub>
          </button>
        </div>
        <input aria-label="수식 입력줄" defaultValue="새송이버섯볶음" className="min-w-0 flex-1 bg-white pl-2 text-[16px] leading-5 outline-none" />
        <button type="button" aria-label="수식 입력줄 확장" className="flex w-4 shrink-0 items-center justify-center border-l border-[#567db1] bg-[linear-gradient(#eaf2fd,#b3cbee)]">
          <svg width="8" height="9" viewBox="0 0 8 9"><path d="M1 1l3 2.500L7 1M1 5l3 2.500L7 5" fill="none" stroke="#000" strokeWidth="1.600" /></svg>
        </button>
      </div>

      <main className="mt-[3px] flex min-h-0 flex-1">
        <div className="min-w-0 flex-1 overflow-hidden bg-white">
          <Sheet />
        </div>
        <VerticalScroll />
      </main>
      <SheetTabs />
      <StatusBar />
      <Taskbar />
    </div>
  );
}
